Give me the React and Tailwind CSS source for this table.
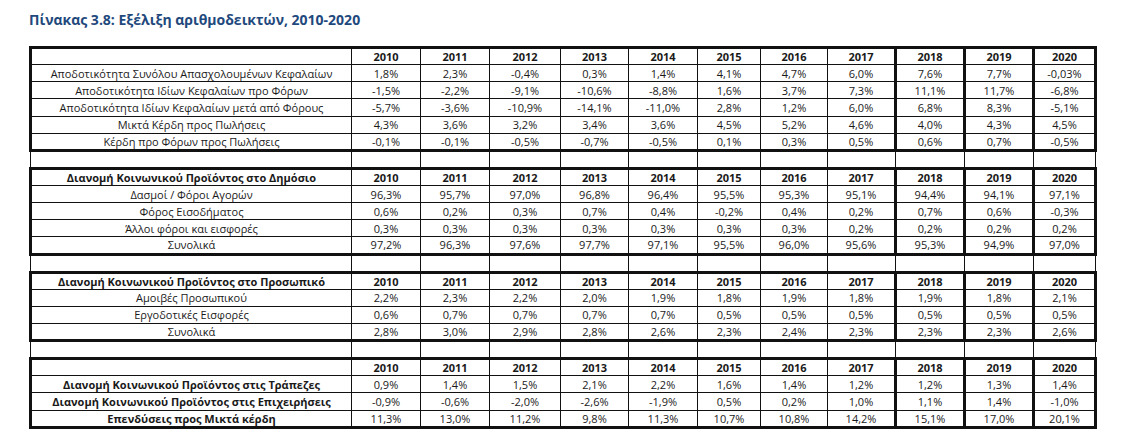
const YEARS = ["2010", "2011", "2012", "2013", "2014", "2015", "2016", "2017", "2018", "2019", "2020"];

const SECTIONS = [
  {
    head: "",
    rows: [
      ["Αποδοτικότητα Συνόλου Απασχολουμένων Κεφαλαίων", ["1,8%", "2,3%", "-0,4%", "0,3%", "1,4%", "4,1%", "4,7%", "6,0%", "7,6%", "7,7%", "-0,03%"]],
      ["Αποδοτικότητα Ιδίων Κεφαλαίων προ Φόρων", ["-1,5%", "-2,2%", "-9,1%", "-10,6%", "-8,8%", "1,6%", "3,7%", "7,3%", "11,1%", "11,7%", "-6,8%"]],
      ["Αποδοτικότητα Ιδίων Κεφαλαίων μετά από Φόρους", ["-5,7%", "-3,6%", "-10,9%", "-14,1%", "-11,0%", "2,8%", "1,2%", "6,0%", "6,8%", "8,3%", "-5,1%"]],
      ["Μικτά Κέρδη προς Πωλήσεις", ["4,3%", "3,6%", "3,2%", "3,4%", "3,6%", "4,5%", "5,2%", "4,6%", "4,0%", "4,3%", "4,5%"]],
      ["Κέρδη προ Φόρων προς Πωλήσεις", ["-0,1%", "-0,1%", "-0,5%", "-0,7%", "-0,5%", "0,1%", "0,3%", "0,5%", "0,6%", "0,7%", "-0,5%"]],
    ],
  },
  {
    head: "Διανομή Κοινωνικού Προϊόντος στο Δημόσιο",
    rows: [
      ["Δασμοί / Φόροι Αγορών", ["96,3%", "95,7%", "97,0%", "96,8%", "96,4%", "95,5%", "95,3%", "95,1%", "94,4%", "94,1%", "97,1%"]],
      ["Φόρος Εισοδήματος", ["0,6%", "0,2%", "0,3%", "0,7%", "0,4%", "-0,2%", "0,4%", "0,2%", "0,7%", "0,6%", "-0,3%"]],
      ["Άλλοι φόροι και εισφορές", ["0,3%", "0,3%", "0,3%", "0,3%", "0,3%", "0,3%", "0,3%", "0,2%", "0,2%", "0,2%", "0,2%"]],
      ["Συνολικά", ["97,2%", "96,3%", "97,6%", "97,7%", "97,1%", "95,5%", "96,0%", "95,6%", "95,3%", "94,9%", "97,0%"]],
    ],
  },
  {
    head: "Διανομή Κοινωνικού Προϊόντος στο Προσωπικό",
    rows: [
      ["Αμοιβές Προσωπικού", ["2,2%", "2,3%", "2,2%", "2,0%", "1,9%", "1,8%", "1,9%", "1,8%", "1,9%", "1,8%", "2,1%"]],
      ["Εργοδοτικές Εισφορές", ["0,6%", "0,7%", "0,7%", "0,7%", "0,7%", "0,5%", "0,5%", "0,5%", "0,5%", "0,5%", "0,5%"]],
      ["Συνολικά", ["2,8%", "3,0%", "2,9%", "2,8%", "2,6%", "2,3%", "2,4%", "2,3%", "2,3%", "2,3%", "2,6%"]],
    ],
  },
  {
    head: "",
    boldLabels: true,
    rows: [
      ["Διανομή Κοινωνικού Προϊόντος στις Τράπεζες", ["0,9%", "1,4%", "1,5%", "2,1%", "2,2%", "1,6%", "1,4%", "1,2%", "1,2%", "1,3%", "1,4%"]],
      ["Διανομή Κοινωνικού Προϊόντος στις Επιχειρήσεις", ["-0,9%", "-0,6%", "-2,0%", "-2,6%", "-1,9%", "0,5%", "0,2%", "1,0%", "1,1%", "1,4%", "-1,0%"]],
      ["Επενδύσεις προς Μικτά κέρδη", ["11,3%", "13,0%", "11,2%", "9,8%", "11,3%", "10,7%", "10,8%", "14,2%", "15,1%", "17,0%", "20,1%"]],
    ],
  },
];

const COL_W = ["w-[321px]", "w-[69px]", "w-[69px]", "w-[71px]", "w-[68px]", "w-[69px]", "w-[63px]", "w-[67px]", "w-[68px]", "w-[69px]", "w-[69px]", "w-[62px]"];

// year columns with heavy left rule: 2018, 2019, 2020
const heavyLeft = (i) => i >= 8;

function cellCls(colIndex, first, last) {
  let c = "border border-[#111] text-center align-middle p-0 leading-none";
  if (colIndex === 0) c += " border-l-[3px]";
  if (colIndex > 0 && heavyLeft(colIndex - 1)) c += " border-l-[3px]";
  if (colIndex === 11) c += " border-r-[3px]";
  if (first) c += " border-t-[3px]";
  if (last) c += " border-b-[3px]";
  return c;
}

function Section({ sec }) {
  const n = sec.rows.length;
  return (
    <>
      <tr className="h-[17.15px]">
        <td className={cellCls(0, true, false) + " font-bold"}>{sec.head}</td>
        {YEARS.map((y, i) => (
          <td key={y} className={cellCls(i + 1, true, false) + " font-bold"}>{y}</td>
        ))}
      </tr>
      {sec.rows.map(([label, vals], r) => (
        <tr key={label} className="h-[17.15px]">
          <td className={cellCls(0, false, r === n - 1) + (sec.boldLabels ? " font-bold" : "")}>{label}</td>
          {vals.map((v, i) => (
            <td key={i} className={cellCls(i + 1, false, r === n - 1)}>{v}</td>
          ))}
        </tr>
      ))}
    </>
  );
}

function Spacer() {
  return (
    <tr className="h-[18px]">
      {COL_W.map((_, i) => (
        <td key={i} className="border border-[#111] p-0" />
      ))}
    </tr>
  );
}

export default function App() {
  return (
    <div className="w-[1128px] h-[447px] bg-white pl-[29px] pt-[9px]" style={{ fontFamily: '"Open Sans", "Noto Sans", sans-serif' }}>
      <h1 className="text-[14px] font-bold text-[#1f497d] leading-[22px]">
        Πίνακας 3.8: Εξέλιξη αριθμοδεικτών, 2010-2020
      </h1>
      <table className="mt-[15px] table-fixed border-collapse text-[11px] text-[#1a1a1a] w-[1067px]">
        <colgroup>
          {COL_W.map((w, i) => (
            <col key={i} className={w} />
          ))}
        </colgroup>
        <tbody>
          {SECTIONS.map((sec, s) => (
            <Section key={s} sec={sec} />
          )).reduce((acc, el, i) => (i === 0 ? [el] : [...acc, <Spacer key={"sp" + i} />, el]), [])}
        </tbody>
      </table>
    </div>
  );
}
